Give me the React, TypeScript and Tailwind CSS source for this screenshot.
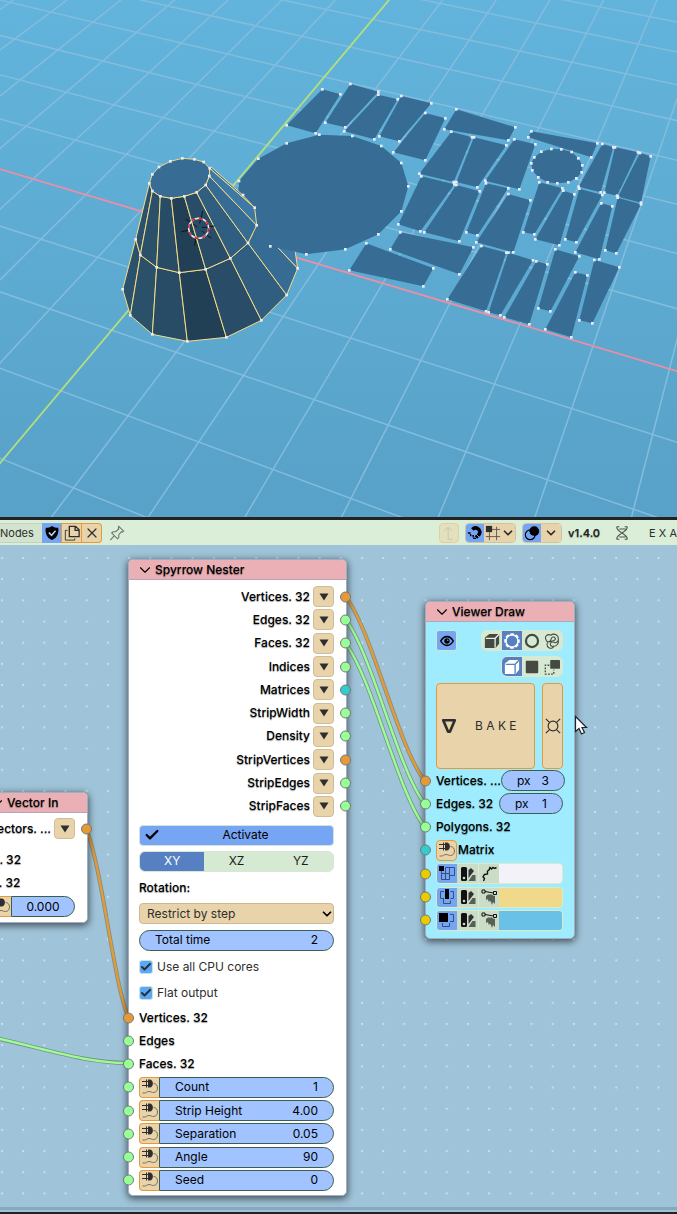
import type { ReactNode } from 'react';
import { Check, ChevronDown, X } from 'lucide-react';

type Point = [number, number];

const LABEL = 'font-medium text-black [text-shadow:0_1px_1px_rgba(0,0,0,0.4)]';
const TAN = 'bg-[#e8d3aa]';

const SOCKET_COLORS = {
  orange: 'bg-[#e69a37]',
  green: 'bg-[#96ff96]',
  teal: 'bg-[#33cccc]',
  yellow: 'bg-[#e6cc00]',
};

type SocketColor = keyof typeof SOCKET_COLORS;

// ---------------------------------------------------------------- viewport

// ground plane -> screen
function project(i: number, j: number): Point {
  const d = 1 - 0.01979 * i + 0.0525 * j;
  return [(54.18 * i + 48.77 * j + 197.5) / d, (12.82 * i - 33.75 * j + 228) / d];
}

function range(from: number, to: number) {
  return Array.from({ length: to - from + 1 }, (_, n) => from + n);
}

const join = (points: Point[]) => points.map((p) => p.join(',')).join(' ');

const STRIPS: Point[][] = [
  [[-44, 88], [10, 103], [-64, 220], [-151, 196]],
  [[40, 72], [124, 95], [25, 202], [-35, 188]],
  [[124, 104], [182, 118], [112, 238], [22, 214]],
  [[193, 108], [283, 130], [187, 244], [127, 229]],
  [[265, 159], [325, 175], [265, 301], [169, 277]],
  [[358, 148], [535, 202], [514, 241], [322, 208]],
  [[343, 215], [405, 232], [350, 366], [247, 341]],
  [[411, 232], [508, 256], [421, 382], [358, 366]],
  [[532, 238], [595, 253], [547, 388], [445, 362]],
  [[583, 214], [781, 250], [763, 292], [574, 232]],
  [[796, 252], [829, 262], [791, 397], [725, 380]],
  [[834, 262], [903, 277], [840, 407], [802, 398]],
  [[909, 279], [941, 289], [912, 428], [843, 410]],
  [[253, 349], [352, 373], [250, 514], [184, 493]],
  [[358, 375], [428, 394], [367, 544], [262, 517]],
  [[447, 370], [514, 385], [421, 526], [388, 517]],
  [[514, 402], [580, 421], [529, 577], [418, 547]],
  [[607, 367], [676, 385], [592, 523], [559, 517]],
  [[679, 392], [712, 403], [667, 556], [595, 538]],
  [[727, 386], [796, 405], [718, 547], [685, 538]],
  [[793, 430], [826, 439], [787, 598], [715, 577]],
  [[842, 413], [912, 433], [838, 580], [805, 571]],
  [[190, 517], [409, 562], [367, 643], [160, 568]],
  [[88, 550], [289, 625], [259, 679], [37, 631]],
  [[433, 558], [508, 578], [447, 754], [331, 718]],
  [[514, 578], [588, 601], [490, 766], [455, 757]],
  [[598, 604], [631, 613], [577, 793], [502, 772]],
  [[655, 568], [727, 589], [640, 754], [604, 745]],
  [[715, 637], [751, 646], [703, 832], [625, 808]],
  [[772, 600], [847, 622], [766, 790], [727, 781]],
  [[613, 275], [643, 267], [673, 268], [704, 276], [724, 295], [736, 316], [734, 337], [718, 355], [694, 367], [661, 370], [632, 367], [604, 352], [586, 331], [583, 310], [592, 292]],
];

const DISC: Point[] = [
  [-53, 224], [46, 228], [133, 258], [193, 309], [214, 379], [193, 454], [124, 523], [25, 568],
  [-92, 583], [-200, 559], [-268, 506], [-298, 440], [-294, 363], [-236, 296], [-151, 250],
];

const CAP: Point[] = [
  [148, 130], [157, 103], [177, 81], [211, 64], [247, 55], [283, 58], [311, 66], [329, 85],
  [328, 108], [317, 135], [290, 157], [253, 169], [214, 175], [181, 169], [157, 153],
];
const TOP_RING: Point[] = [[148, 130], [157, 153], [181, 169], [214, 175], [253, 169], [290, 157], [317, 135], [328, 108], [329, 85]];
const MID_RING: Point[] = [[107, 298], [121, 345], [170, 382], [238, 398], [317, 388], [391, 355], [444, 309], [470, 256], [464, 203]];
const LOW_RING: Point[] = [[68, 448], [91, 526], [157, 583], [262, 604], [379, 592], [484, 541], [560, 465], [593, 385], [586, 337]];
const FACETS = ['#2b526d', '#2a506a', '#284c66', '#213f55', '#294d68', '#305e80', '#366b93', '#3d79a6'];

function Facets({ upper, lower }: { upper: Point[]; lower: Point[] }) {
  return (
    <g stroke="#f6dc84" strokeWidth="3" strokeLinejoin="round">
      {FACETS.map((fill, n) => (
        <polygon key={fill} points={join([upper[n], upper[n + 1], lower[n + 1], lower[n]])} fill={fill} />
      ))}
    </g>
  );
}

function Verts({ points }: { points: Point[] }) {
  return (
    <g fill="#eaeaf6">
      {points.map(([x, y]) => (
        <rect key={`${x}-${y}`} x={x - 4} y={y - 4} width="8" height="8" />
      ))}
    </g>
  );
}

function Viewport() {
  const third = 1 / 3;
  return (
    <svg viewBox="0 0 677 517" preserveAspectRatio="xMidYMid slice" className="block h-[517px] w-full" role="img" aria-label="3D viewport">
      <defs>
        <linearGradient id="sky" x1="0" y1="0" x2="0" y2="1">
          <stop offset="0" stopColor="#62b4dc" />
          <stop offset="1" stopColor="#58a1c8" />
        </linearGradient>
      </defs>
      <rect x="-700" width="2100" height="517" fill="url(#sky)" />
      <g stroke="#84bcdd" strokeWidth="1.5" fill="none">
        {range(-9, 10).filter((i) => i !== 0).map((i) => (
          <polyline key={`y${i}`} points={join([project(i, -8), project(i, 16)])} />
        ))}
        {range(-8, 14).filter((j) => j !== 0).map((j) => (
          <polyline key={`x${j}`} points={join([project(-14, j), project(14, j)])} />
        ))}
      </g>
      <polyline points={join([project(0, -8), project(0, 16)])} stroke="#b2df7e" strokeWidth="1.8" />
      <polyline points={join([project(-14, 0), project(14, 0)])} stroke="#ee8ea4" strokeWidth="1.8" />

      <g transform={`translate(100 140) scale(${third})`}>
        <Facets upper={MID_RING} lower={LOW_RING} />
        <Verts points={LOW_RING.slice(0, 8)} />
      </g>
      <g transform={`translate(337 60) scale(${third})`}>
        {[DISC, ...STRIPS].map((points, n) => (
          <g key={n}>
            <polygon points={join(points)} fill="#376c94" />
            <Verts points={points} />
          </g>
        ))}
      </g>
      <g transform={`translate(100 140) scale(${third})`}>
        <polygon points="329,85 333,80 428,165 464,203" fill="#3d79a6" stroke="#f6dc84" strokeWidth="3" />
        <Facets upper={TOP_RING} lower={MID_RING} />
        <polygon points={join(CAP)} fill="#376c94" stroke="#f6dc84" strokeWidth="3" />
        <Verts points={[...CAP, ...MID_RING, [429, 165]]} />
        <g stroke="#0d1419" strokeWidth="3">
          <path d="M303 236l5-23M287 294l-3 23M264 271l-20 4M326 260l18-2M270 247l-13-10M316 283l18 11M306 262h16M306 272l8 8M292 262l-12-10M299 250l3-14" />
        </g>
        <circle cx="296" cy="265" r="30" fill="none" stroke="#e9e9e9" strokeWidth="4.5" />
        <circle cx="296" cy="265" r="30" fill="none" stroke="#e21d28" strokeWidth="4.5" strokeDasharray="11.8 11.8" />
      </g>
    </svg>
  );
}

// ------------------------------------------------------------------- icons

function Icon({ children, size = 'size-4' }: { children: ReactNode; size?: string }) {
  return (
    <svg viewBox="0 0 18 18" className={`${size} shrink-0`} fill="none" stroke="currentColor" aria-hidden="true">
      {children}
    </svg>
  );
}

function PlugIcon() {
  return (
    <Icon size="size-[18px]">
      <path d="M7 1.500h1.500c4.500 0 4.500 8 0 8H7z" fill="#2e2e2e" stroke="none" />
      <path d="M1 3.500h6M1 7.500h6M5.500 1.500v8" stroke="#2e2e2e" />
      <path d="M12.500 5.500c2.500 0 4 2 4 4.500s-1.500 4.500-4 4.500c-2 0-2.500-1-4.500-1s-2.500 1.500-4.500 1.500H1.500" stroke="#7d6f58" />
    </Icon>
  );
}

function SwatchIcon() {
  return (
    <Icon size="size-[18px]">
      <rect x="2" y="2" width="6" height="14" rx="1.500" fill="#111" stroke="none" />
      <circle cx="5" cy="13" r="1.300" fill="#cbdcc7" stroke="none" />
      <path d="M9.500 5l2.500-2 3 3-5.500 7z" fill="#333" stroke="none" />
      <path d="M9.500 16l4-6h3v6z" fill="#566054" stroke="none" />
    </Icon>
  );
}

function CurveIcon() {
  return (
    <Icon size="size-[18px]">
      <path d="M3.500 16l1-2.500-1.500-1.500 1.500-2.500 3-.5v-3l1.500-1 1-2.500 1.500 1.500 1.500-1.500 1.500 1 2-1" stroke="#111" strokeWidth="1.400" />
    </Icon>
  );
}

function VectorIcon() {
  return (
    <Icon size="size-[18px]">
      <path d="M2 2h3v3H2zM13.500 3.500h3v3h-3zM5 3.500l8.500 1.500" stroke="#111" />
      <path d="M6 8l2-1.500h4l1 1 2 .5v8l-2-2-1 3-1.500-4-2 .5L8 11l-2 1z" fill="#566054" stroke="none" />
    </Icon>
  );
}

function Chevron({ className = '' }: { className?: string }) {
  return <ChevronDown className={`size-[14px] shrink-0 ${className}`} strokeWidth={3} />;
}

// --------------------------------------------------------------- node parts

function Socket({ color, side }: { color: SocketColor; side: 'left' | 'right' }) {
  const place = side === 'left' ? '-left-4' : '-right-[17px]';
  return <span className={`absolute ${place} top-1/2 size-[11px] -translate-y-1/2 rounded-full border border-[#777] ${SOCKET_COLORS[color]}`} />;
}

function NodeFrame({ title, place, body, children }: { title: string; place: string; body: string; children: ReactNode }) {
  return (
    <section className={`absolute rounded-[5px] border border-[#a3adc0] shadow-[0_2px_7px_1px_rgba(0,0,0,0.55)] ${place} ${body}`}>
      <header className="flex h-5 items-center gap-px rounded-t-[4px] border-b border-[#b3a7b5] bg-[#eab0b5] pl-[7px]">
        <ChevronDown className="size-[18px] shrink-0" strokeWidth={1.5} />
        <h2 className={`whitespace-nowrap ${LABEL}`}>{title}</h2>
      </header>
      {children}
    </section>
  );
}

function OutputRow({ label, color }: { label: string; color: SocketColor }) {
  return (
    <div className="relative flex items-center justify-end gap-[3px]">
      <span className={`whitespace-nowrap ${LABEL}`}>{label}</span>
      <button type="button" aria-label={`${label} options`} className={`flex size-[21px] shrink-0 items-center justify-center rounded-[4px] border border-[#d0bd97] ${TAN}`}>
        <svg viewBox="0 0 10 8" className="h-2 w-[10px]" aria-hidden="true">
          <path d="M.5.5h9L5 7.500z" fill="#2e2e2e" />
        </svg>
      </button>
      <Socket color={color} side="right" />
    </div>
  );
}

function InputRow({ label, color, children }: { label?: string; color?: SocketColor; children?: ReactNode }) {
  return (
    <div className="relative flex items-center">
      {color && <Socket color={color} side="left" />}
      {label && <span className={`whitespace-nowrap ${LABEL}`}>{label}</span>}
      {children}
    </div>
  );
}

function PlugButton({ label, joined }: { label: string; joined?: boolean }) {
  return (
    <button
      type="button"
      aria-label={`Connect ${label}`}
      className={`flex h-[21px] shrink-0 items-center justify-center border border-[#e69a37] ${TAN} ${joined ? 'w-5 rounded-l-[4px] border-r-0' : 'w-[21px] rounded-[4px]'}`}
    >
      <PlugIcon />
    </button>
  );
}

function PlugField({ label, value }: { label: string; value: string }) {
  return (
    <>
      <PlugButton label={label} joined />
      <label className="flex h-[21px] min-w-0 grow items-center rounded-r-full border border-[#3b5f4c] bg-[#a1c3ff] px-[15px] text-black">
        <span className="whitespace-nowrap">{label}</span>
        <input type="text" defaultValue={value} className="w-0 grow bg-transparent text-right outline-none" />
      </label>
    </>
  );
}

function PixelField({ value }: { value: string }) {
  return (
    <label className="ml-auto flex h-[21px] w-16 shrink-0 items-center rounded-full border border-[#3b5f4c] bg-[#a1c3ff] px-[15px] text-black">
      px
      <input type="text" defaultValue={value} className="w-0 grow bg-transparent text-right outline-none" />
    </label>
  );
}

function CheckRow({ label }: { label: string }) {
  return (
    <label className="flex items-center gap-1 text-[#2e2e2e]">
      <span className="relative flex size-[14px]">
        <input type="checkbox" defaultChecked className="size-[14px] appearance-none rounded-[3px] border border-[#c8e6d8] bg-[#5aa7fa]" />
        <Check className="pointer-events-none absolute top-px left-px size-3" strokeWidth={4} />
      </span>
      {label}
    </label>
  );
}

// -------------------------------------------------------------------- nodes

const OUTPUTS: [string, SocketColor][] = [
  ['Vertices. 32', 'orange'],
  ['Edges. 32', 'green'],
  ['Faces. 32', 'green'],
  ['Indices', 'green'],
  ['Matrices', 'teal'],
  ['StripWidth', 'green'],
  ['Density', 'green'],
  ['StripVertices', 'orange'],
  ['StripEdges', 'green'],
  ['StripFaces', 'green'],
];

const PARAMS = [
  ['Count', '1'],
  ['Strip Height', '4.00'],
  ['Separation', '0.05'],
  ['Angle', '90'],
  ['Seed', '0'],
];

function SpyrrowNester() {
  return (
    <NodeFrame title="Spyrrow Nester" place="top-[14px] left-[128px] w-[219px]" body="bg-white">
      <div className="pt-[5px] pr-3 pb-[3px] pl-[10px]">
        <div className="grid h-[233px] auto-rows-fr">
          {OUTPUTS.map(([label, color]) => (
            <OutputRow key={label} label={label} color={color} />
          ))}
        </div>

        <div className="mt-1 grid h-[184px] auto-rows-fr grid-cols-1 items-center">
          <button type="button" aria-pressed="true" className="relative flex h-[21px] items-center justify-center rounded-[4px] border border-[#cfe6e0] bg-[#76a5f3] pl-[18px] text-black">
            <Check className="absolute left-1 size-4" strokeWidth={3.5} />
            Activate
          </button>
          <div className="grid h-[21px] grid-cols-3 overflow-hidden rounded-[6px] border border-[#d5e9d3] bg-[#d5e9d3] text-[#1d1d1d]">
            <button type="button" aria-pressed="true" className="bg-[#5680c2] text-white">XY</button>
            <button type="button">XZ</button>
            <button type="button">YZ</button>
          </div>
          <label htmlFor="rotation" className={LABEL}>Rotation:</label>
          <div className="relative flex items-center">
            <select id="rotation" className={`h-[21px] w-full appearance-none rounded-[4px] border border-[#cdb98f] pr-6 pl-[7px] text-[#2e2e2e] ${TAN}`}>
              <option>Restrict by step</option>
            </select>
            <Chevron className="pointer-events-none absolute right-0" />
          </div>
          <label className="flex h-[21px] items-center rounded-full border border-[#3b5f4c] bg-[#a1c3ff] px-[15px] text-black">
            <span className="whitespace-nowrap">Total time</span>
            <input type="text" defaultValue="2" className="w-0 grow bg-transparent text-right outline-none" />
          </label>
          <CheckRow label="Use all CPU cores" />
          <CheckRow label="Flat output" />
        </div>

        <div className="grid h-[186px] auto-rows-fr grid-cols-1">
          <InputRow label="Vertices. 32" color="orange" />
          <InputRow label="Edges" color="green" />
          <InputRow label="Faces. 32" color="green" />
          {PARAMS.map(([label, value]) => (
            <InputRow key={label} color="green">
              <PlugField label={label} value={value} />
            </InputRow>
          ))}
        </div>
      </div>
    </NodeFrame>
  );
}

function VectorIn() {
  return (
    <NodeFrame title="Vector In" place="top-[247px] -left-5 w-[108px]" body="bg-white">
      <div className="pt-[5px] pr-3 pb-1 pl-[10px]">
        <OutputRow label="Vectors. ..." color="orange" />
        <div className="mt-[9px] grid h-[70px] auto-rows-fr grid-cols-1">
          <InputRow label="X. 32" />
          <InputRow label="Y. 32" />
          <InputRow>
            <PlugButton label="Z" joined />
            <input type="text" aria-label="Z" defaultValue="0.000" className="h-[21px] w-0 grow rounded-r-full border border-[#3b5f4c] bg-[#a1c3ff] text-center text-black outline-none" />
          </InputRow>
        </div>
      </div>
    </NodeFrame>
  );
}

function ColorRow({ first, last, swatch, name }: { first: ReactNode; last: ReactNode; swatch: string; name: string }) {
  return (
    <InputRow color="yellow">
      <div className="flex h-[21px] w-full overflow-hidden rounded-[4px] border border-[#dcebc5]">
        <button type="button" aria-label={`Show ${name}`} className="flex w-5 items-center justify-center bg-[#76a5f3]">{first}</button>
        <button type="button" aria-label={`${name} palette`} className="flex w-[21px] items-center justify-center bg-[#cbdcc7]"><SwatchIcon /></button>
        <button type="button" aria-label={`${name} attributes`} className="flex w-[21px] items-center justify-center border-l border-[#dcebd8] bg-[#cbdcc7]">{last}</button>
        <button type="button" aria-label={`${name} color`} className={`grow ${swatch}`} />
      </div>
    </InputRow>
  );
}

function ViewerDraw() {
  const cell = 'flex h-full w-5 items-center justify-center';
  return (
    <NodeFrame title="Viewer Draw" place="top-[56px] left-[425px] w-[150px]" body="bg-[#a0ecff]">
      <div className="pt-2 pr-[11px] pb-[6px] pl-[10px]">
        <div className="flex items-center justify-between text-[#454a42]">
          <button type="button" aria-label="Show" aria-pressed="true" className="flex size-[21px] items-center justify-center rounded-[3px] border border-[#cfe6cf] bg-[#76a5f3] text-black">
            <Icon size="size-[14px]">
              <path d="M1 9c4-7.500 12-7.500 16 0-4 7.500-12 7.500-16 0z" strokeWidth="2" />
              <circle cx="9" cy="9" r="3.500" fill="currentColor" stroke="none" />
              <circle cx="10" cy="8" r="1" fill="#76a5f3" stroke="none" />
            </Icon>
          </button>
          <div className="flex h-[21px] overflow-hidden rounded-[6px] border border-[#d5e9d3] bg-[#d5e9d3]">
            <button type="button" aria-label="Shaded" className={cell}>
              <Icon>
                <path d="M1 5l5-4h11v11l-4 5H1z" fill="currentColor" stroke="none" />
                <path d="M2 6h10.500v10.500M12.500 6L17 1.500" stroke="#e6f1e4" strokeWidth="1.500" />
              </Icon>
            </button>
            <button type="button" aria-label="Dashed" aria-pressed="true" className={`${cell} bg-[#5680c2] text-white`}>
              <Icon>
                <circle cx="9" cy="9" r="6.800" strokeWidth="1.500" />
                <circle cx="9" cy="9" r="7.500" strokeWidth="2.500" strokeDasharray="4 1.890" strokeDashoffset="2" />
              </Icon>
            </button>
            <button type="button" aria-label="Circle" className={cell}>
              <Icon><circle cx="9" cy="9" r="6.800" strokeWidth="2.500" /></Icon>
            </button>
            <button type="button" aria-label="Curves" className={cell}>
              <Icon>
                <path d="M2.500 8C0 4 4 .5 7.500 2.500M7.500 2.500c4-3 9.500 0 8.500 5 0 3-3 4-5 3s-4 0-4 2 2 3 4 2.500c3 0 6-3 5-7.500M2.500 8c0 2 3 2.500 4.500 1s.5-4 3-4.500 3.500 2 2 3.500-5 1-7 2-2.500 5 .5 6.500 5 0 5.500-1.500" strokeWidth="1.200" />
              </Icon>
            </button>
          </div>
        </div>

        <div className="mt-[5px] flex justify-end text-[#454a42]">
          <div className="flex h-[21px] overflow-hidden rounded-[6px] border border-[#d5e9d3] bg-[#d5e9d3]">
            <button type="button" aria-label="Flat shading" aria-pressed="true" className={`${cell} bg-[#5680c2] text-white`}>
              <Icon>
                <path d="M1 5l5-4h11v11l-4 5H1z" fill="currentColor" stroke="none" />
                <path d="M2 6h10.500v10.500M12.500 6L17 1.500" stroke="#5680c2" strokeWidth="1.500" />
              </Icon>
            </button>
            <button type="button" aria-label="Solid" className={cell}>
              <Icon><rect x="2" y="2" width="14" height="14" rx="1" fill="currentColor" stroke="none" /></Icon>
            </button>
            <button type="button" aria-label="Overlay" className={cell}>
              <Icon>
                <rect x="7" y="1" width="11" height="10" rx="1" fill="currentColor" stroke="none" />
                <path d="M6 7H1.500v10H11v-5" strokeWidth="1.500" strokeDasharray="2 1.500" />
              </Icon>
            </button>
          </div>
        </div>

        <div className="mt-[6px] flex h-[86px] gap-[7px] text-[#2e2e2e]">
          <button type="button" className={`flex grow items-center gap-[18px] rounded-[4px] border border-[#e69a37] pl-1 ${TAN}`}>
            <Icon><path d="M2.500 2.500h13L10 15.500H8z" strokeWidth="3" strokeLinejoin="round" /></Icon>
            <span>B A K E</span>
          </button>
          <button type="button" aria-label="Bake all" className={`flex w-[21px] items-center justify-center rounded-[4px] border border-[#e69a37] ${TAN}`}>
            <Icon>
              <circle cx="9" cy="9" r="5.500" strokeWidth="1.300" />
              <path d="M1 1l4 4M17 1l-4 4M1 17l4-4M17 17l-4-4" strokeWidth="1.300" />
            </Icon>
          </button>
        </div>

        <div className="grid h-[163px] auto-rows-fr grid-cols-1">
          <InputRow label="Vertices. ..." color="orange"><PixelField value="3" /></InputRow>
          <InputRow label="Edges. 32" color="green"><PixelField value="1" /></InputRow>
          <InputRow label="Polygons. 32" color="green" />
          <InputRow color="teal">
            <PlugButton label="Matrix" />
            <span className={`pl-px ${LABEL}`}>Matrix</span>
          </InputRow>
          <ColorRow
            name="Vertices"
            swatch="bg-[#f2f2f8]"
            last={<CurveIcon />}
            first={
              <Icon size="size-[18px]">
                <path d="M3.500 6v8.500h8v-4h5v-8h-9v12M3.500 8.500h8v6M11.500 2.500v8" stroke="#33507f" />
                <rect x="1" y="1" width="5" height="5" fill="#000" stroke="none" />
              </Icon>
            }
          />
          <ColorRow
            name="Edges"
            swatch="bg-[#f1d98b]"
            last={<VectorIcon />}
            first={
              <Icon size="size-[18px]">
                <path d="M6 3.500H2.500v7H6M12.500 3.500h3v7h-3M5.500 10.500v5h7v-3" stroke="#33507f" />
                <rect x="7" y="1" width="4" height="10" fill="#000" stroke="none" />
              </Icon>
            }
          />
          <ColorRow
            name="Polygons"
            swatch="bg-[#6ac1e8]"
            last={<VectorIcon />}
            first={
              <Icon size="size-[18px]">
                <path d="M12 3.500h3.500v7H12M4.500 12v3.500h7V12" stroke="#33507f" />
                <rect x="1" y="2" width="9" height="9" fill="#000" stroke="none" />
              </Icon>
            }
          />
        </div>
      </div>
    </NodeFrame>
  );
}

function Links() {
  const links = [
    ['M345 51C372 84 398 203 425 236', '#e69a37'],
    ['M345 74C372 107 398 226 425 259', '#96ff96'],
    ['M345 98C372 131 398 249 425 282', '#96ff96'],
    ['M86 284C101 316 114 440 128 471', '#e69a37'],
    ['M-20 490C35 500 80 518 128 518', '#96ff96'],
  ];
  return (
    <svg className="absolute inset-0 size-full" fill="none" aria-hidden="true">
      <defs>
        <pattern id="dots" x="1" y="12" width="21.18" height="21.18" patternUnits="userSpaceOnUse">
          <rect width="2" height="2" fill="#c5dfec" />
        </pattern>
      </defs>
      <rect width="100%" height="100%" fill="url(#dots)" />
      {links.map(([d, color]) => (
        <g key={d}>
          <path d={d} stroke="#7f8f84" strokeWidth="4" />
          <path d={d} stroke={color} strokeWidth="2.400" />
        </g>
      ))}
    </svg>
  );
}

function EditorHeader() {
  return (
    <div className="flex h-[25px] items-center overflow-hidden bg-[#dbeed8] whitespace-nowrap text-[#2e2e2e]">
      <span className="flex h-5 w-[42px] shrink-0 items-center border-y border-[#c3d2c0] bg-[#d2e4ce] text-[11px]">Nodes</span>
      <button type="button" aria-label="Fake user" className="flex h-5 w-[19px] shrink-0 items-center justify-center bg-[#76a5f3] text-black">
        <Icon>
          <path d="M9 1c2.500 2 4.500 2 7 2 1 6-1 11-7 14C3 14 1 9 2 3c2.500 0 4.500 0 7-2z" fill="currentColor" stroke="none" />
          <path d="M5.500 8.500l3 3 4.500-5" stroke="#b8d0fa" strokeWidth="1.800" />
        </Icon>
      </button>
      <button type="button" aria-label="Duplicate" className={`flex h-5 w-[21px] shrink-0 items-center justify-center border border-[#e69a37] ${TAN}`}>
        <Icon>
          <path d="M6 1.500h7l4 4V13H6zM12.500 1.500V6H17" strokeWidth="1.500" />
          <path d="M4 6H1.500v11H12v-2" />
        </Icon>
      </button>
      <button type="button" aria-label="Unlink" className={`flex h-5 w-5 shrink-0 items-center justify-center rounded-r-[4px] border border-l-0 border-[#e69a37] ${TAN}`}>
        <X className="size-4" strokeWidth={1.8} />
      </button>
      <button type="button" aria-label="Pin" className="ml-[7px] text-[#6b7668]">
        <Icon><path d="M11 1.500l5.500 5.500-1.500 1-1-.5-3 3.500v3L9.500 15.500 3 9l1.500-1.500h3L11 4.500l-.5-1zM6 12l-4.500 5" strokeWidth="1.200" /></Icon>
      </button>

      <div className="ml-auto flex shrink-0 items-center">
        <button type="button" disabled aria-label="Parent tree" className="flex size-5 items-center justify-center rounded-[4px] border border-[#e6cf96] bg-[#e2e0be] text-[#c4c3a8]">
          <Icon><path d="M13 16H8V3M4 6.500L8 2.500l4 4" /></Icon>
        </button>
        <div className="ml-[6px] flex h-5 overflow-hidden rounded-[4px] border border-[#ccc3aa]">
          <button type="button" aria-label="Snap" aria-pressed="true" className="flex w-[18px] items-center justify-center bg-[#76a5f3] text-black">
            <Icon>
              <path d="M6 5c4-4 10 0 8 5l-4 4" strokeWidth="4" />
              <path d="M10 10l4 4M2 4l3 3" stroke="#76a5f3" />
              <path d="M1 9h3v3h3v3h3" strokeWidth="1.500" strokeDasharray="3 1" />
            </Icon>
          </button>
          <button type="button" aria-label="Snap target" className={`flex w-[31px] items-center justify-center ${TAN}`}>
            <Icon>
              <path d="M5 8v9M13 2v15M7 5h10M1 13h16" stroke="#555" />
              <rect x="1" y="1" width="7" height="7" fill="#2e2e2e" stroke="none" />
            </Icon>
            <Chevron />
          </button>
        </div>
        <div className="ml-[6px] flex h-5 overflow-hidden rounded-[4px] border border-[#ccc3aa]">
          <button type="button" aria-label="Overlays" aria-pressed="true" className="flex w-[18px] items-center justify-center bg-[#76a5f3] text-black">
            <Icon>
              <circle cx="7" cy="11" r="5.500" strokeWidth="1.300" />
              <circle cx="11.500" cy="7" r="5.500" fill="currentColor" stroke="none" />
              <path d="M6 8c0 3 2 4.500 5 4.500" stroke="#76a5f3" />
            </Icon>
          </button>
          <button type="button" aria-label="Overlay options" className={`flex w-5 items-center justify-center ${TAN}`}>
            <Chevron />
          </button>
        </div>
        <span className="ml-[6px] text-[11px] font-semibold text-[#222] [text-shadow:0_1px_1px_rgba(0,0,0,0.3)]">v1.4.0</span>
        <button type="button" aria-label="Sverchok" className="ml-[14px] text-[#4a5248]">
          <Icon>
            <path d="M3 2c0 7 12 7 12 14M15 2c0 7-12 7-12 14M3 2h3M12 2h3M3 16h3M12 16h3M6 4.500h7M6 13.500h7" strokeWidth="1.200" />
          </Icon>
        </button>
        <span className="ml-[19px] text-[11px]">E X A</span>
      </div>
    </div>
  );
}

export default function App() {
  return (
    <main className="w-full overflow-hidden bg-[#232323] font-['Inter','Noto_Sans',sans-serif] text-[12px] leading-4">
      <Viewport />
      <div className="mt-[3px]">
        <EditorHeader />
      </div>
      <div className="relative h-[662px] bg-[#9fc3d8]">
        <Links />
        <VectorIn />
        <SpyrrowNester />
        <ViewerDraw />
        <svg viewBox="0 0 14 20" className="absolute top-[170px] left-[574px] h-5 w-[14px]" aria-hidden="true">
          <path d="M1.500 1.500v15l3.500-3 2.500 5.500 3-1.500-2.500-5h4.500z" fill="#fff" stroke="#1b2330" strokeWidth="1.200" />
        </svg>
      </div>
      <div className="h-[3px] bg-[#86a9bf]" />
      <div className="mb-[2px] h-[2px] bg-[#9fc3d8]" />
    </main>
  );
}
